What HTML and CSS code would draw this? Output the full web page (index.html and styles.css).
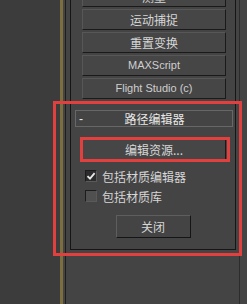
FILE: index.html
```html
<!DOCTYPE html>
<html lang="zh">
<head>
<meta charset="utf-8">
<link rel="stylesheet" href="styles.css">
</head>
<body>
<div class="app">
  <div class="side"></div>
  <div class="accent"></div>
  <div class="panel">
    <div class="frame">
      <div class="rollouts">
        <div class="util">
          <div class="btn">测量</div>
          <div class="btn">运动捕捉</div>
          <div class="btn">重置变换</div>
          <div class="btn latin">MAXScript</div>
          <div class="btn latin">Flight Studio (c)</div>
        </div>
        <div class="path">
          <div class="head"><span class="minus">-</span><span class="title">路径编辑器</span></div>
          <div class="btn edit">编辑资源...</div>
          <div class="checks">
            <div class="check"><span class="box on"><svg viewBox="0 0 12 12" width="12" height="12"><path d="M2.5 6.2 L5 8.7 L9.6 3.2" fill="none" stroke="#e8e8e8" stroke-width="1.8"/></svg></span><span>包括材质编辑器</span></div>
            <div class="check"><span class="box"></span><span>包括材质库</span></div>
          </div>
          <div class="btn close">关闭</div>
        </div>
      </div>
    </div>
  </div>
</div>
<div class="mark mark-outer"></div>
<div class="mark mark-inner"></div>
</body>
</html>
```
FILE: styles.css
```css
html, body {
  margin: 0;
  padding: 0;
}
body {
  width: 247px;
  height: 304px;
  overflow: hidden;
  background: #444444;
  font-family: "Noto Sans CJK SC", "Liberation Sans", sans-serif;
  font-size: 12px;
  color: #d6d6d6;
  position: relative;
}
.app {
  display: flex;
  height: 304px;
}
.side {
  width: 60px;
  background: #3c3c3c;
}
.accent {
  width: 3px;
  background: #7c6e3e;
}
.panel {
  width: 184px;
  padding: 0 7px 0 2px;
  box-sizing: border-box;
  background: #444444;
  display: flex;
}
.frame {
  flex: 1;
  border-left: 1px solid #1e1e1e;
  border-right: 1px solid #2c2c2c;
  padding: 0 3px 0 4px;
}
.rollouts {
  border-left: 1px solid #161616;
  border-right: 1px solid #161616;
  border-bottom: 1px solid #161616;
  height: 249px;
  overflow: hidden;
}
.util {
  display: flex;
  flex-direction: column;
  gap: 2px;
  margin-top: -14px;
  padding: 0 9px 0 11px;
}
.btn {
  height: 21px;
  box-sizing: border-box;
  background: #464646;
  border-top: 1px solid #575757;
  border-left: 1px solid #575757;
  border-right: 1px solid #1a1a1a;
  border-bottom: 1px solid #1a1a1a;
  display: flex;
  align-items: center;
  justify-content: center;
  line-height: 1;
  white-space: nowrap;
}
.latin {
  font-family: "Liberation Sans", sans-serif;
  font-size: 11px;
  color: #cfcfcf;
}
.path {
  padding-top: 11px;
  display: flex;
  flex-direction: column;
}
.head {
  margin: 0 2px 0 4px;
  height: 17px;
  box-sizing: border-box;
  border: 1px solid #676767;
  position: relative;
  display: flex;
  align-items: center;
  justify-content: center;
  color: #e8e8e8;
}
.minus {
  position: absolute;
  left: 3px;
  top: 1px;
  font-family: "Liberation Sans", sans-serif;
  font-size: 12px;
  color: #e8e8e8;
}
.title {
  padding-left: 1px;
}
.edit {
  margin: 12px 9px 0 11px;
}
.checks {
  margin-top: 6px;
  padding-left: 14px;
  display: flex;
  flex-direction: column;
}
.check {
  height: 20px;
  display: flex;
  align-items: center;
  gap: 5px;
}
.box {
  width: 12px;
  height: 12px;
  box-sizing: border-box;
  border-top: 1px solid #1c1c1c;
  border-left: 1px solid #1c1c1c;
  border-right: 1px solid #5a5a5a;
  border-bottom: 1px solid #5a5a5a;
  background: #505050;
  display: flex;
  align-items: center;
  justify-content: center;
}
.box.on {
  background: #2c2c2c;
}
.box svg {
  display: block;
  flex: none;
}
.close {
  margin: 9px auto 0;
  width: 75px;
  height: 23px;
  background: #444444;
  border-top: 1px solid #5e5e5e;
  border-left: 1px solid #5e5e5e;
  border-right: 1px solid #151515;
  border-bottom: 1px solid #151515;
}
.mark {
  position: absolute;
  box-sizing: border-box;
  border: 3px solid #e2403f;
}
.mark-outer {
  left: 53px;
  top: 101px;
  width: 189px;
  height: 155px;
}
.mark-inner {
  left: 80px;
  top: 137px;
  width: 150px;
  height: 25px;
}
```
